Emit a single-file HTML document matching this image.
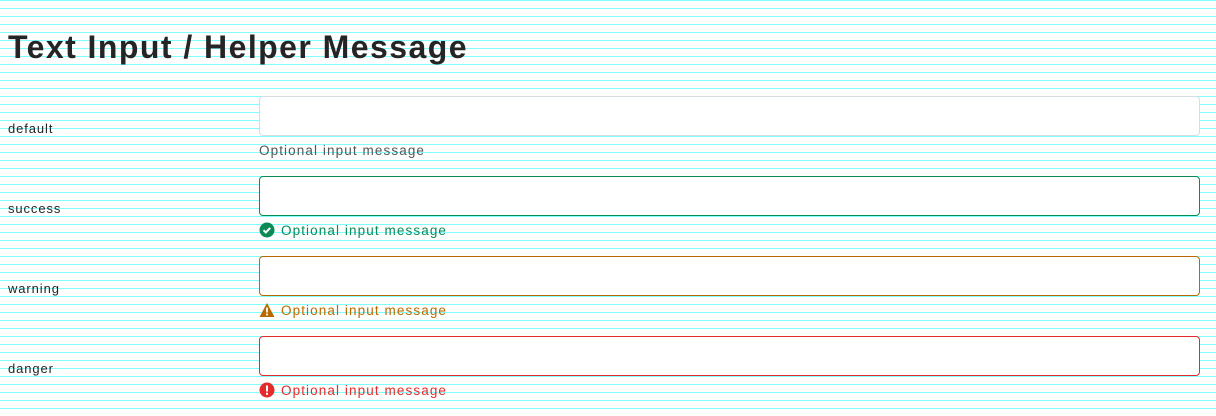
<!DOCTYPE html>
<html><head><style>
html,body{margin:0;padding:0}
body{width:1216px;height:416px;overflow:hidden;position:relative;font-family:"Liberation Sans",sans-serif;
background:repeating-linear-gradient(to bottom,#80ffff 0,#80ffff 1px,#fff 1px,#fff 8px);}
h1{position:absolute;left:8px;top:28px;margin:0;font-size:32px;font-weight:bold;color:#252525;letter-spacing:1.45px;line-height:38px}
.lab{position:absolute;left:8px;font-size:13px;color:#252525;letter-spacing:0.9px}
.inp{position:absolute;left:259px;width:939px;height:38px;border:1px solid #d8dde2;border-radius:4px;background:#fff}
.msg{position:absolute;left:259px;font-size:13.5px;color:#555;display:flex;align-items:center;gap:6px;letter-spacing:1.1px}
svg{display:block}
</style></head><body>
<h1>Text Input / Helper Message</h1>

<div class="lab" style="top:121px">default</div>
<div class="inp" style="top:96px"></div>
<div class="msg" style="top:143px">Optional input message</div>

<div class="lab" style="top:201px">success</div>
<div class="inp" style="top:176px;border-color:#0a8a55"></div>
<div class="msg" style="top:222px;color:#0a8a55"><svg width="16" height="16" viewBox="0 0 16 16"><circle cx="8" cy="8" r="7.5" fill="#0a8a55"/><path d="M4.5 8.2l2.3 2.3 4.4-4.6" stroke="#fff" stroke-width="2" fill="none"/></svg>Optional input message</div>

<div class="lab" style="top:281px">warning</div>
<div class="inp" style="top:256px;border-color:#b86a00"></div>
<div class="msg" style="top:302px;color:#b86a00"><svg width="16" height="16" viewBox="0 0 16 16"><path d="M8 1L15.5 15H0.5Z" fill="#b86a00"/><rect x="7.1" y="5.5" width="1.8" height="5" fill="#fff"/><rect x="7.1" y="11.6" width="1.8" height="1.8" fill="#fff"/></svg>Optional input message</div>

<div class="lab" style="top:361px">danger</div>
<div class="inp" style="top:336px;border-color:#e22b2b"></div>
<div class="msg" style="top:382px;color:#e22b2b"><svg width="16" height="16" viewBox="0 0 16 16"><circle cx="8" cy="8" r="7.5" fill="#e22b2b"/><rect x="7" y="3.5" width="2" height="6" fill="#fff"/><rect x="7" y="10.8" width="2" height="2" fill="#fff"/></svg>Optional input message</div>
</body></html>
